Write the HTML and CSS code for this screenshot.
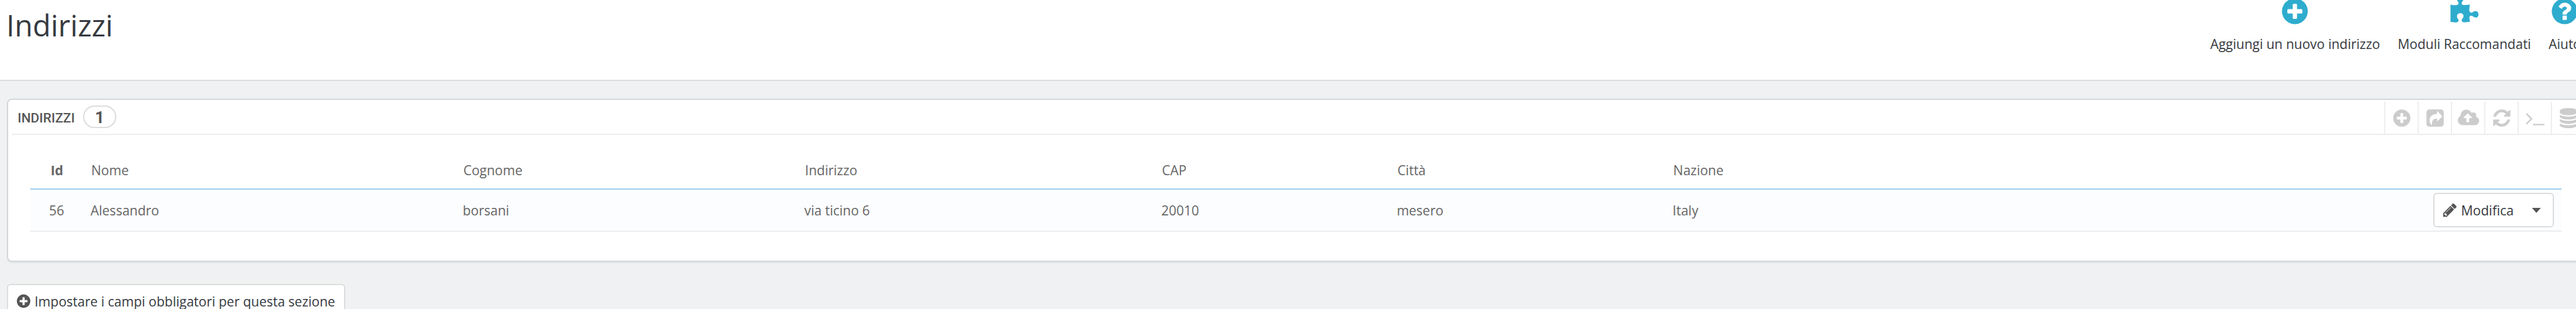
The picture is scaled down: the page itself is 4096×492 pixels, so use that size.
FILE: index.html
```
<!DOCTYPE html>
<html lang="it">
<head>
    <meta charset="UTF-8">
    <meta name="viewport" content="width=device-width, initial-scale=1.0">
    <title>Indirizzi</title>
    <link rel="stylesheet" href="styles.css">
</head>
<body>
    <svg class="sprite" aria-hidden="true">
        <symbol id="icon-plus" viewBox="0 0 1792 1792"><path d="M1344 960v-128q0-26-19-45t-45-19h-256v-256q0-26-19-45t-45-19h-128q-26 0-45 19t-19 45v256h-256q-26 0-45 19t-19 45v128q0 26 19 45t45 19h256v256q0 26 19 45t45 19h128q26 0 45-19t19-45v-256h256q26 0 45-19t19-45zm320-64q0 209-103 385.5t-279.5 279.5-385.5 103-385.5-103-279.5-279.5-103-385.5 103-385.5 279.5-279.5 385.5-103 385.5 103 279.5 279.5 103 385.5z"/></symbol>
        <symbol id="icon-help" viewBox="0 0 1792 1792"><path d="M1024 1376v-192q0-14-9-23t-23-9h-192q-14 0-23 9t-9 23v192q0 14 9 23t23 9h192q14 0 23-9t9-23zm256-672q0-88-55.5-163t-138.5-116-170-41q-243 0-371 213-15 24 8 42l132 100q7 6 19 6 16 0 25-12 53-68 86-92 34-24 86-24 48 0 85.5 26t37.5 59q0 38-20 61t-68 45q-63 28-115.5 86.5t-52.5 125.5v36q0 14 9 23t23 9h192q14 0 23-9t9-23q0-19 21.5-49.5t54.5-49.5q32-18 49-28.5t46-35 44.5-48 28-60.5 12.5-81zm384 192q0 209-103 385.5t-279.5 279.5-385.5 103-385.5-103-279.5-279.5-103-385.5 103-385.5 279.5-279.5 385.5-103 385.5 103 279.5 279.5 103 385.5z"/></symbol>
        <symbol id="icon-puzzle" viewBox="0 0 1792 1792"><path d="M1755 1083q0 81-44.5 135t-123.5 54q-41 0-77.5-17.5t-59-38-56.5-38-71-17.5q-110 0-110 124 0 39 16 115t15 115v5q-22 0-33 1-34 3-97.5 11.5t-115.5 13.5-98 5q-61 0-103-26.5t-42-83.5q0-37 17.5-71t38-56.5 38-59 17.5-77.5q0-79-54-123.5t-135-44.5q-84 0-143 45.5t-59 127.5q0 43 15 83t33.5 64.5 33.5 53 15 50.5q0 45-46 89-37 35-117 35-95 0-245-24-9-2-27.5-4t-27.5-4l-13-2q-1 0-3-1-2 0-2-1v-1024q2 1 17.5 3.5t34 5 21.5 3.5q150 24 245 24 80 0 117-35 46-44 46-89 0-22-15-50.5t-33.5-53-33.5-64.5-15-83q0-82 59-127.5t144-45.5q80 0 134 44.5t54 123.5q0 41-17.5 77.5t-38 59-38 56.5-17.5 71q0 57 42 83.5t103 26.5q64 0 180-15t163-17v2q-1 2-3.5 17.5t-5 34-3.5 21.5q-24 150-24 245 0 80 35 117 44 46 89 46 22 0 50.5-15t53-33.5 64.5-33.5 83-15q82 0 127.5 59t45.5 143z"/></symbol>
        <symbol id="icon-export" viewBox="0 0 112 112"><path fill-rule="evenodd" d="M25 8h62q17 0 17 17v62q0 17-17 17h-62q-17 0-17-17v-62q0-17 17-17zM70 18q-3-2-3 2v12q-42 4-42 36 0 13 9 25 4 4 4-1-2-33 29-33v11q0 5 4 2l22-22q4-3 0-7z"/></symbol>
        <symbol id="icon-upload" viewBox="-64 0 1920 1792"><path d="M1216 864q0-14-9-23l-352-352q-9-9-23-9t-23 9l-351 351q-10 12-10 24 0 14 9 23t23 9h224v352q0 13 9.5 22.5t22.5 9.5h192q13 0 22.5-9.5t9.5-22.5v-352h224q13 0 22.5-9.5t9.5-22.5zm640 288q0 159-112.5 271.5t-271.5 112.5h-1088q-185 0-316.5-131.5t-131.5-316.5q0-130 70-240t188-165q-2-30-2-43 0-212 150-362t362-150q156 0 285.5 87t188.5 231q71-62 166-62 106 0 181 75t75 181q0 76-41 138 130 31 213.5 135.5t83.5 238.5z"/></symbol>
        <symbol id="icon-refresh" viewBox="0 0 1792 1792"><path d="M1639 1056q0 5-1 7-64 268-268 434.5t-478 166.5q-146 0-282.5-55t-243.5-157l-129 129q-19 19-45 19t-45-19-19-45v-448q0-26 19-45t45-19h448q26 0 45 19t19 45-19 45l-137 137q71 66 161 102t187 36q134 0 250-65t186-179q11-17 53-117 8-23 30-23h192q13 0 22.5 9.5t9.5 22.5zm25-800v448q0 26-19 45t-45 19h-448q-26 0-45-19t-19-45 19-45l138-138q-148-137-349-137-134 0-250 65t-186 179q-11 17-53 117-8 23-30 23h-199q-13 0-22.5-9.5t-9.5-22.5v-7q65-268 270-434.5t480-166.5q146 0 284 55.5t245 156.5l130-129q19-19 45-19t45 19 19 45z"/></symbol>
        <symbol id="icon-terminal" viewBox="0 0 1792 1792"><path d="M649 983l-466 466q-10 10-23 10t-23-10l-50-50q-10-10-10-23t10-23l393-393-393-393q-10-10-10-23t10-23l50-50q10-10 23-10t23 10l466 466q10 10 10 23t-10 23zm1079 457v64q0 14-9 23t-23 9h-960q-14 0-23-9t-9-23v-64q0-14 9-23t23-9h960q14 0 23 9t9 23z"/></symbol>
        <symbol id="icon-database" viewBox="0 0 1792 1792"><path d="M896 768q237 0 443-43t325-127v170q0 69-103 128t-280 93.500-385 34.500-385-34.500-280-93.500-103-128v-170q119 84 325 127t443 43zm0 768q237 0 443-43t325-127v170q0 69-103 128t-280 93.500-385 34.500-385-34.500-280-93.500-103-128v-170q119 84 325 127t443 43zm0-384q237 0 443-43t325-127v170q0 69-103 128t-280 93.500-385 34.500-385-34.500-280-93.500-103-128v-170q119 84 325 127t443 43zm0-1152q208 0 385 34.500t280 93.500 103 128v128q0 69-103 128t-280 93.500-385 34.500-385-34.500-280-93.500-103-128v-128q0-69 103-128t280-93.500 385-34.500z"/></symbol>
        <symbol id="icon-pencil" viewBox="0 0 1792 1792"><path d="M491 1536l91-91-235-235-91 91v107h128v128h107zm523-928q0-22-22-22-10 0-17 7l-542 542q-7 7-7 17 0 22 22 22 10 0 17-7l542-542q7-7 7-17zm-54-192l416 416-832 832h-416v-416zm683 96q0 53-37 90l-166 166-416-416 166-165q36-38 90-38 53 0 91 38l235 234q37 39 37 91z"/></symbol>
    </svg>

    <header class="page-head">
        <h1>Indirizzi</h1>
        <nav class="page-toolbar">
            <a href="#"><svg><use href="#icon-plus"/></svg>Aggiungi un nuovo indirizzo</a>
            <a href="#"><svg><use href="#icon-puzzle"/></svg>Moduli Raccomandati</a>
            <a href="#"><svg><use href="#icon-help"/></svg>Aiuto</a>
        </nav>
    </header>

    <main>
        <section class="panel">
            <div class="panel-heading">
                <h2>INDIRIZZI</h2>
                <span class="badge">1</span>
                <div class="panel-actions">
                    <a href="#" aria-label="Aggiungi"><svg><use href="#icon-plus"/></svg></a>
                    <a href="#" aria-label="Esporta"><svg><use href="#icon-export"/></svg></a>
                    <a href="#" aria-label="Importa"><svg class="wide"><use href="#icon-upload"/></svg></a>
                    <a href="#" aria-label="Aggiorna"><svg><use href="#icon-refresh"/></svg></a>
                    <a href="#" aria-label="Mostra query SQL"><svg><use href="#icon-terminal"/></svg></a>
                    <a href="#" aria-label="Esporta in SQL Manager"><svg><use href="#icon-database"/></svg></a>
                </div>
            </div>
            <table>
                <colgroup>
                    <col class="col-id">
                    <col class="col-name">
                    <col class="col-surname">
                    <col class="col-address">
                    <col class="col-zip">
                    <col class="col-city">
                    <col>
                    <col class="col-actions">
                </colgroup>
                <thead>
                    <tr>
                        <th class="id">Id</th>
                        <th>Nome</th>
                        <th>Cognome</th>
                        <th>Indirizzo</th>
                        <th>CAP</th>
                        <th>Città</th>
                        <th>Nazione</th>
                        <th></th>
                    </tr>
                </thead>
                <tbody>
                    <tr>
                        <td class="id">56</td>
                        <td>Alessandro</td>
                        <td>borsani</td>
                        <td>via ticino 6</td>
                        <td>20010</td>
                        <td>mesero</td>
                        <td>Italy</td>
                        <td>
                            <div class="btn-group">
                                <button type="button"><svg><use href="#icon-pencil"/></svg>Modifica</button>
                                <button type="button" class="toggle" aria-label="Altre azioni"><span class="caret"></span></button>
                            </div>
                        </td>
                    </tr>
                </tbody>
            </table>
        </section>

        <button type="button"><svg><use href="#icon-plus"/></svg>Impostare i campi obbligatori per questa sezione</button>
    </main>
</body>
</html>
```
FILE: styles.css
```
:root {
    --text-color: #363a41;
    --muted-color: #666;
    --icon-color: #555;
    --accent-color: #2eacce;
    --background-color: #eff1f2;
    --border-color: #ddd;
}
* {
    box-sizing: border-box;
}
html {
    height: 100%;
    overflow: hidden;
    background-color: var(--background-color);
}
/* the back office is slightly wider than the window */
body {
    width: calc(100% + 25px);
    margin: 0;
    font-family: "Open Sans", sans-serif;
    font-size: 21px;
    line-height: 28px;
    color: var(--text-color);
    background-color: var(--background-color);
}
svg {
    display: block;
    flex: none;
    fill: currentColor;
}
.sprite {
    display: none;
}
.page-head {
    display: flex;
    justify-content: space-between;
    align-items: flex-start;
    height: 129px;
    padding: 0 17px 0 10px;
    background-color: #fff;
    border-bottom: 2px solid var(--border-color);
}
h1 {
    margin: 8px 0 0;
    font-size: 47px;
    font-weight: 400;
    line-height: 64px;
}
.page-toolbar {
    display: flex;
    gap: 28px;
    margin-top: -6px;
}
.page-toolbar a {
    display: flex;
    flex-direction: column;
    align-items: center;
    gap: 14px;
    color: var(--text-color);
    text-decoration: none;
    white-space: nowrap;
}
.page-toolbar svg {
    width: 48px;
    height: 48px;
    color: var(--accent-color);
}
main {
    padding: 28px 11px;
}
.panel {
    padding: 3px 6px 46px;
    margin-bottom: 35px;
    background-color: #fff;
    border: 2px solid #d3d8db;
    border-radius: 8px;
    box-shadow: 0 2px 2px rgba(0,0,0,0.05);
}
.panel-heading {
    display: flex;
    align-items: center;
    height: 53px;
    padding-left: 9px;
    border-bottom: 2px solid #eee;
}
h2 {
    margin: 0 13px 0 0;
    font-family: Roboto, "Open Sans", sans-serif;
    font-size: 21px;
    font-weight: 500;
    color: var(--icon-color);
}
.badge {
    width: 53px;
    height: 36px;
    margin-bottom: 4px;
    border: 2px solid var(--border-color);
    border-radius: 18px;
    font-family: Roboto, "Open Sans", sans-serif;
    font-size: 26px;
    font-weight: 700;
    line-height: 34px;
    text-align: center;
    color: var(--icon-color);
}
.panel-actions {
    display: flex;
    align-self: stretch;
    margin-left: auto;
    margin-right: -7px;
}
.panel-actions a {
    display: flex;
    justify-content: center;
    align-items: center;
    width: 53px;
    border-left: 2px solid #eee;
    color: #ccc;
}
.panel-actions svg {
    width: 32px;
    height: 32px;
}
.panel-actions .wide {
    width: 34px;
}
table {
    width: calc(100% - 58px);
    margin: 33px 29px 0;
    table-layout: fixed;
    border-collapse: separate;
    border-spacing: 0;
    color: var(--muted-color);
}
.col-id {
    width: 84px;
}
.col-name {
    width: 14.7%;
}
.col-surname {
    width: 13.5%;
}
.col-address {
    width: 14.1%;
}
.col-zip {
    width: 9.3%;
}
.col-city {
    width: 10.9%;
}
.col-actions {
    width: 240px;
}
th,
td {
    padding: 0 12px;
    text-align: left;
}
th {
    height: 54px;
    padding-bottom: 6px;
    padding-left: 13px;
    font-weight: 400;
    border-bottom: 2px solid #a0d0eb;
}
td {
    height: 67px;
    background-color: #fcfdfe;
    border-bottom: 2px solid #eaedef;
}
.id {
    text-align: center;
}
th.id {
    font-weight: 700;
}
.btn-group {
    display: flex;
    justify-content: flex-end;
}
button {
    display: flex;
    align-items: center;
    gap: 5px;
    height: 55px;
    padding: 0 14px 0 12px;
    font: inherit;
    color: var(--text-color);
    background-color: #fff;
    border: 2px solid var(--border-color);
    border-radius: 6px;
    white-space: nowrap;
    cursor: pointer;
}
button svg {
    width: 25px;
    height: 25px;
    color: var(--icon-color);
}
.btn-group button:first-child {
    border-right: none;
    border-radius: 6px 0 0 6px;
}
.btn-group .toggle {
    padding: 0 19px 0 15px;
    border-left: none;
    border-radius: 0 6px 6px 0;
}
.caret {
    border-top: 8px solid var(--icon-color);
    border-left: 7px solid transparent;
    border-right: 7px solid transparent;
}
```
